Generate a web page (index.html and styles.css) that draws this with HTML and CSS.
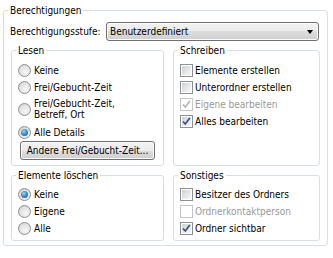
FILE: index.html
```html
<!DOCTYPE html>
<html lang="de">

<head>
    <meta charset="UTF-8">
    <title>Berechtigungen</title>
    <link rel="stylesheet" href="styles.css">
</head>

<body>
    <fieldset class="group outer">
        <legend>Berechtigungen</legend>
        <div class="level-row">
            <span class="level-label">Berechtigungsstufe:</span>
            <div class="combo">
                <span>Benutzerdefiniert</span>
                <span class="combo-arrow"></span>
            </div>
        </div>

        <div class="grid">
            <fieldset class="group box-lesen">
                <legend>Lesen</legend>
                <div class="opt"><span class="rb"></span>Keine</div>
                <div class="opt"><span class="rb"></span>Frei/Gebucht-Zeit</div>
                <div class="opt opt-multi"><span class="rb"></span><span>Frei/Gebucht-Zeit,<br>Betreff, Ort</span></div>
                <div class="opt"><span class="rb on"></span>Alle Details</div>
                <button class="btn">Andere Frei/Gebucht-Zeit...</button>
            </fieldset>

            <fieldset class="group box-schreiben">
                <legend>Schreiben</legend>
                <div class="opt"><span class="cb"></span>Elemente erstellen</div>
                <div class="opt"><span class="cb"></span>Unterordner erstellen</div>
                <div class="opt disabled"><span class="cb on"><svg viewBox="0 0 13 13"><path d="M3 6.5 L5.3 9 L9.8 3"/></svg></span>Eigene bearbeiten</div>
                <div class="opt"><span class="cb on"><svg viewBox="0 0 13 13"><path d="M3 6.5 L5.3 9 L9.8 3"/></svg></span>Alles bearbeiten</div>
            </fieldset>

            <fieldset class="group box-small">
                <legend>Elemente löschen</legend>
                <div class="opt"><span class="rb on"></span>Keine</div>
                <div class="opt"><span class="rb"></span>Eigene</div>
                <div class="opt"><span class="rb"></span>Alle</div>
            </fieldset>

            <fieldset class="group box-small">
                <legend>Sonstiges</legend>
                <div class="opt"><span class="cb"></span>Besitzer des Ordners</div>
                <div class="opt disabled"><span class="cb"></span>Ordnerkontaktperson</div>
                <div class="opt"><span class="cb on"><svg viewBox="0 0 13 13"><path d="M3 6.5 L5.3 9 L9.8 3"/></svg></span>Ordner sichtbar</div>
            </fieldset>
        </div>
    </fieldset>
</body>

</html>
```

FILE: styles.css
```css
body {
    margin: 0;
    background: #fff;
    color: #000;
    font-family: "DejaVu Sans Condensed", "DejaVu Sans", sans-serif;
    font-stretch: condensed;
    font-size: 10px;
}

/* group boxes, win7 look */
.group {
    min-width: 0;
    margin: 0;
    border: 1px solid #d5dfe5;
    border-radius: 3px;
    box-shadow: inset 1px 1px 0 #fff;
}

.group legend {
    margin-left: -1px;
    padding: 0 2px;
    line-height: 13px;
}

.outer {
    margin: 4px 5px 0 3px;
    padding: 5px 7px 4px 6px;
}

.outer > legend {
    margin-left: -2px;
}

.level-row {
    display: flex;
    align-items: center;
}

.level-label {
    width: 96px;
}

.combo {
    display: flex;
    flex: 1;
    align-items: center;
    justify-content: space-between;
    height: 17px;
    margin-right: 1px;
    padding: 0 5px 0 3px;
    border: 1px solid #707070;
    border-radius: 3px;
    background: linear-gradient(#f2f2f2 0%, #ebebeb 50%, #dddddd 50%, #cfcfcf 100%);
    box-shadow: inset 0 0 0 1px #fcfcfc;
}

.combo-arrow {
    width: 0;
    height: 0;
    border-top: 4px solid #000;
    border-right: 3.5px solid transparent;
    border-left: 3.5px solid transparent;
}

.grid {
    display: grid;
    grid-template-columns: 153px 1fr;
    column-gap: 9px;
    row-gap: 3px;
    margin: 3px 0 0 1px;
}

.box-lesen,
.box-schreiben {
    padding: 5px 5px 5px 6px;
}

.box-small {
    padding: 4px 5px 3px 6px;
}

.group > legend {
    margin-left: -2px;
}

.opt {
    display: flex;
    align-items: center;
    height: 17px;
    white-space: nowrap;
}

.opt-multi {
    height: 26px;
    margin-bottom: 2px;
    line-height: 11px;
}

.disabled {
    color: #999;
}

/* radio */
.rb {
    flex: none;
    position: relative;
    width: 11px;
    height: 11px;
    margin-right: 3px;
    border: 1px solid #8f8f8f;
    border-radius: 50%;
    background: radial-gradient(circle at 60% 65%, #f6f6f6 0%, #e3e3e3 55%, #c9c9c9 100%);
}

.rb.on::after {
    position: absolute;
    top: 2px;
    left: 2px;
    width: 7px;
    height: 7px;
    content: "";
    border-radius: 50%;
    background: radial-gradient(circle at 40% 35%, #9fdcf7 0%, #3a8fcf 45%, #174f8c 100%);
}

/* checkbox */
.cb {
    flex: none;
    display: flex;
    align-items: center;
    justify-content: center;
    width: 11px;
    height: 11px;
    margin-right: 2px;
    border: 1px solid #8e8f8f;
    background: linear-gradient(135deg, #c9ccd1 0%, #e9eaec 60%, #f8f8f8 100%);
    box-shadow: inset 0 0 0 1px #fff;
}

.cb svg {
    width: 13px;
    height: 13px;
    flex: none;
}

.cb path {
    fill: none;
    stroke: #3b4f8e;
    stroke-width: 1.7;
}

.disabled .cb {
    border-color: #c5c5c5;
    background: #fff;
}

.disabled .cb path {
    stroke: #b5b5b5;
}

.btn {
    display: block;
    width: 135px;
    height: 19px;
    margin: 0 0 0 2px;
    padding: 0;
    font: inherit;
    color: #000;
    white-space: nowrap;
    border: 1px solid #707070;
    border-radius: 3px;
    background: linear-gradient(#f2f2f2 0%, #ebebeb 50%, #dddddd 50%, #cfcfcf 100%);
    box-shadow: inset 0 0 0 1px #fcfcfc;
}
```
